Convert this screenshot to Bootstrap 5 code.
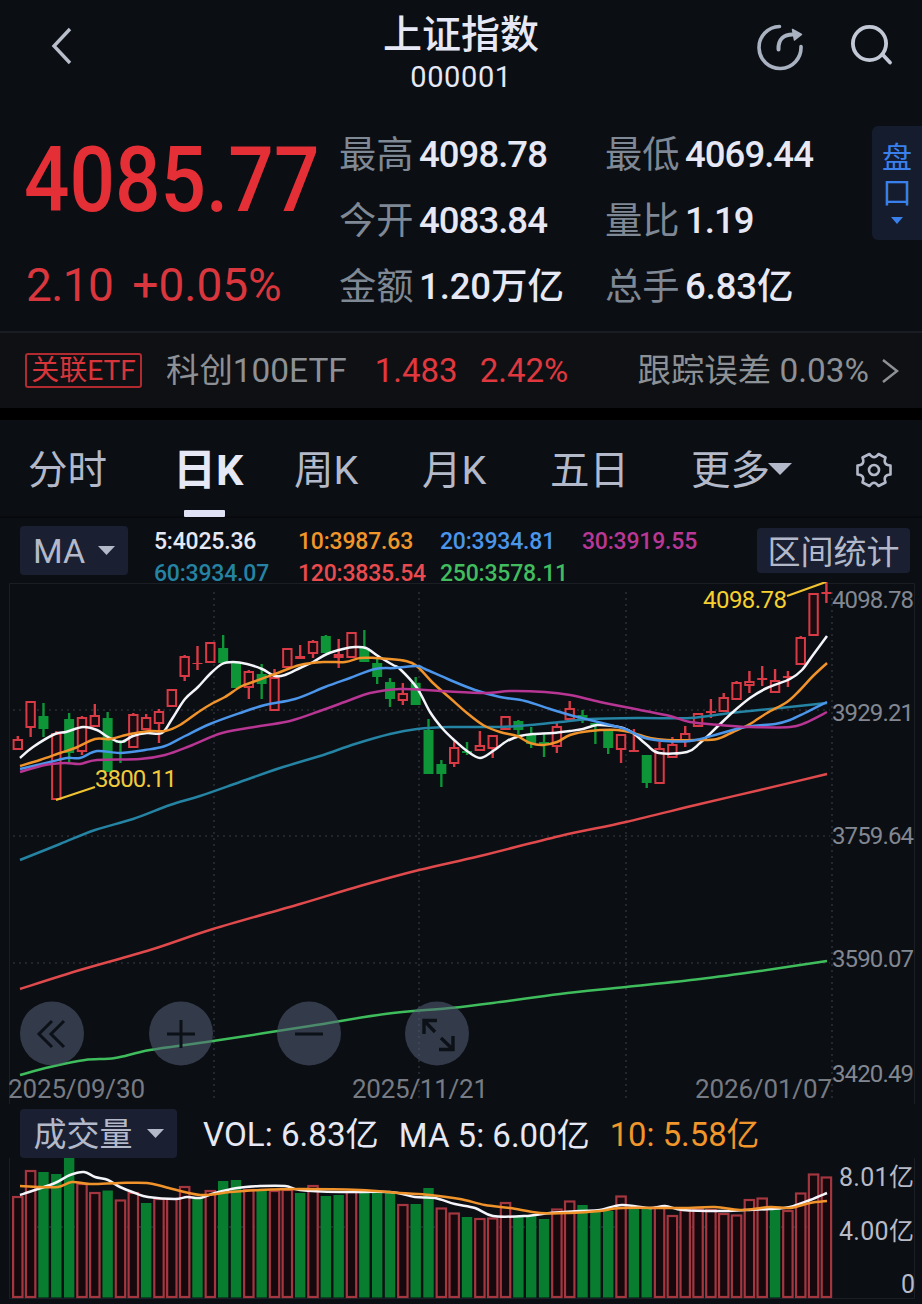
<!DOCTYPE html>
<html lang="zh-CN" data-bs-theme="dark">
<head>
<meta charset="utf-8">
<meta name="viewport" content="width=device-width, initial-scale=1">
<title>上证指数 000001</title>
<link rel="stylesheet" href="https://cdn.jsdelivr.net/npm/bootstrap@5.3.0/dist/css/bootstrap.min.css">
<style>
:root{--ink:#e6e8f5;--soft:#b3b9c9;--dim:#7f8895;--up:#e42f37;--chip:#1a2032}
body{background:#0b0e13;color:var(--ink);font-family:Roboto,"Noto Sans CJK SC",sans-serif;line-height:1;overflow:hidden}
.screen{width:922px;height:1304px}
.screen svg{display:block;flex:none}
.screen span,.screen h1,.screen button,.screen a{white-space:nowrap}
.top-bar{height:124px;padding:12px 29px 0 50px;display:grid;grid-template-columns:333px 156px 1fr}
.top-bar h1{font-size:39px;font-weight:500;line-height:46px;margin:0;color:var(--ink)}
.code{font-size:29px;line-height:36px;padding-top:1px;letter-spacing:.6px}
.icons{gap:46px}
.quote{height:207px;display:grid;grid-template-columns:314px 266px 267px 1fr;padding-left:25px}
.price{font-size:90px;font-weight:500;color:var(--up);line-height:114px;transform:scaleX(.89);transform-origin:left;width:320px;margin-left:-1px;white-space:nowrap}
.change{font-size:46px;color:#d9363e;line-height:50px;padding:22px 0 0 1px;gap:19px}
.change span:first-child{letter-spacing:-.6px}
.stat{height:66px;gap:6px;font-size:37.3px;padding-bottom:3px}
.stat .k{color:var(--dim);width:74px}
.stat .v{font-weight:500;letter-spacing:-.95px;font-size:36.5px}
.stat .cj{letter-spacing:-.1px}
.pan{width:50px;height:114px;margin-top:2px;background:#141c2e;color:#3a80ec;font-size:30px;line-height:35px;border-radius:6px 0 0 6px;padding-top:14px}
.etf{height:77px;border-top:2px solid #1a1d23;background:#0e1014;padding:0 23px 0 25px;color:#8d9095;font-size:33.4px}
.etf .tagbox{border:2px solid #b12a30;color:#d8353b;font-size:28px;height:35px;width:117px;line-height:31px;border-radius:3px}
.redtxt{color:#e0383e;font-size:33px}
.gap-bar{height:12px;background:#000}
.k-tabs{height:98px;border-bottom:2px solid #07090c;color:var(--soft);font-size:39.5px;display:grid;grid-template-columns:148px 118px 128px 128px 141px 163px 1fr;padding-left:28px}
.k-tabs a{color:inherit;text-decoration:none;height:98px;padding-top:3px}
.k-tabs .on{color:var(--ink);font-weight:700;position:relative;font-size:43px}
.k-tabs .on span{margin-left:-3px}
.k-tabs .on::after{content:"";position:absolute;left:8px;bottom:1px;width:41px;height:7px;background:#dfe2f4;border-radius:1px}
.ind{height:64px;padding:8px 12px 0 20px}
.chip{background:var(--chip);color:var(--soft);border:0;border-radius:4px;height:49px}
.legend{display:grid;grid-template-columns:144px 142px 142px 130px;font-size:23px;line-height:32px;margin-left:26px;font-weight:500;height:57px;letter-spacing:-.2px}
.vol-head{height:54px;padding:5px 0 0 20px;font-size:33.2px}
.vol-head>span{padding-top:3px}
svg text{font-family:Roboto,"Noto Sans CJK SC",sans-serif}
</style>
<script src="https://cdn.jsdelivr.net/npm/bootstrap@5.3.0/dist/js/bootstrap.bundle.min.js"></script>
</head>
<body>
<main class="screen d-flex flex-column">
  <header class="top-bar">
    <svg width="24" height="66" viewBox="0 0 24 66" fill="none" stroke="#b9becb" stroke-width="3.4"><path d="M20 17 4 34 20 51"/></svg>
    <div class="text-center"><h1>上证指数</h1><div class="code">000001</div></div>
    <div class="d-flex justify-content-end icons">
      <svg width="48" height="66" viewBox="756 12 48 66" fill="none" stroke="#a9b2c0" stroke-width="3.6" stroke-linecap="round"><path d="M779.500 26.500A21 21 0 1 0 801 46.500"/><path d="M778.500 49.500C778 39 784 34 794 34.500" stroke-width="4"/><path d="M792.500 29.500 801.500 34.500 794.500 40Z" fill="#a9b2c0" stroke-width="1.500" stroke-linejoin="round"/></svg>
      <svg width="43" height="66" viewBox="850 12 43 66" fill="none" stroke="#c3c8d6" stroke-width="3.8" stroke-linecap="round"><circle cx="869.500" cy="43.500" r="16.600"/><path d="M882.500 54.500 890 62.500"/></svg>
    </div>
  </header>

  <section class="quote">
    <div><div class="price">4085.77</div><div class="change d-flex"><span>2.10</span><span>+0.05%</span></div></div>
    <div>
      <div class="stat d-flex align-items-center"><span class="k">最高</span><span class="v">4098.78</span></div>
      <div class="stat d-flex align-items-center"><span class="k">今开</span><span class="v">4083.84</span></div>
      <div class="stat d-flex align-items-center"><span class="k">金额</span><span class="v cj">1.20万亿</span></div>
    </div>
    <div>
      <div class="stat d-flex align-items-center"><span class="k">最低</span><span class="v">4069.44</span></div>
      <div class="stat d-flex align-items-center"><span class="k">量比</span><span class="v">1.19</span></div>
      <div class="stat d-flex align-items-center"><span class="k">总手</span><span class="v cj">6.83亿</span></div>
    </div>
    <div class="pan d-flex flex-column align-items-center"><span>盘</span><span>口</span><svg width="12" height="20" viewBox="0 0 12 20"><path d="M0 7H12L6 14Z" fill="#3a80ec"/></svg></div>
  </section>

  <section class="etf d-flex align-items-center">
    <span class="tagbox text-center">关联ETF</span>
    <span class="ms-4">科创100ETF</span>
    <span class="redtxt ms-4 ps-1">1.483</span>
    <span class="redtxt" style="margin-left:22px">2.42%</span>
    <span class="ms-auto">跟踪误差 0.03%</span>
    <svg class="ms-2" width="22" height="30" viewBox="0 0 22 30" fill="none" stroke="#8d9095" stroke-width="2.500"><path d="M6 4 20 15 6 26"/></svg>
  </section>
  <div class="gap-bar"></div>

  <nav class="k-tabs">
    <a class="d-flex align-items-center" href="#">分时</a>
    <a class="on d-flex align-items-center" href="#"><span>日K</span></a>
    <a class="d-flex align-items-center" href="#">周K</a>
    <a class="d-flex align-items-center" href="#">月K</a>
    <a class="d-flex align-items-center" href="#">五日</a>
    <a class="d-flex align-items-center" href="#">更多<svg width="24" height="16" viewBox="0 0 24 16" style="margin-left:-2px"><path d="M0 0H24L12 12Z" fill="#b3b9c9"/></svg></a>
    <a class="d-flex align-items-center" href="#"><svg width="40" height="38" viewBox="-20 -18 40 38" fill="none" stroke="#b3b9c9" stroke-width="2.600" stroke-linejoin="round"><path d="M16.500-4.500V4.500Q8.500 5 11.500 12.500L4.500 16Q0 9.500-4.500 16L-11.500 12.500Q-8.500 5-16.500 4.500V-4.500Q-8.500-5-11.500-12.500L-4.500-16Q0-9.500 4.500-16L11.500-12.500Q8.500-5 16.500-4.500Z"/><circle r="5"/></svg></a>
  </nav>

  <section class="ind d-flex align-items-start">
    <button class="chip d-flex align-items-center justify-content-center p-0" style="width:108px;font-size:34px;gap:13px"><span>MA</span><svg width="17" height="12" viewBox="0 0 17 12"><path d="M0 1H17L8.500 10Z" fill="#b3b9c9"/></svg></button>
    <div class="legend">
      <span>5:4025.36</span><span style="color:#f0962b">10:3987.63</span><span style="color:#4b95ea">20:3934.81</span><span style="color:#b93796">30:3919.55</span>
      <span style="color:#2583a3">60:3934.07</span><span style="color:#ea4b4f">120:3835.54</span><span style="color:#41bd5f">250:3578.11</span>
    </div>
    <button class="chip ms-auto text-center" style="width:153px;height:45px;font-size:33px;margin-top:2px;padding:3px 0 0">区间统计</button>
  </section>

  <svg id="kline" width="922" height="522" viewBox="0 582 922 522"></svg>

  <section class="vol-head d-flex align-items-center">
    <button class="chip d-flex align-items-center justify-content-center" style="width:157px;font-size:33px;gap:14px;padding:2px 0 0"><span>成交量</span><svg width="17" height="12" viewBox="0 0 17 12"><path d="M0 0H17L8.500 9Z" fill="#b3b9c9"/></svg></button>
    <span style="margin-left:26px">VOL: 6.83亿</span><span style="margin-left:20px;font-size:33px">MA 5: 6.00亿</span><span style="margin-left:20px;color:#f0962b;font-size:32.8px">10: 5.58亿</span>
  </section>

  <svg id="volume" width="922" height="146" viewBox="0 1158 922 146"></svg>
</main>
<script>
const X0=17.8, STEP=12.835, cx=i=>X0+STEP*i;
// colour, high, body top, body bottom, low
const candles=`r736,739,750,750|r701,701,728,737|g703,716,729,737|r731,733,800,800|g713,719,753,763|r716,717,752,755|r704,715,727,727|g712,718,772,772|g740,741,743,763|r713,714,748,748|r714,717,730,730|r709,711,724,743|r689,689,707,707|r655,656,677,681|r646,663,664,670|r642,642,663,663|g635,648,663,663|g663,663,688,688|r670,671,688,699|g664,674,684,699|r669,677,711,711|r648,648,668,668|r645,656,659,659|r640,641,654,658|g635,636,653,653|r639,654,658,668|r632,632,658,658|g630,648,662,662|g659,663,677,684|g678,682,699,707|r683,693,701,705|g677,683,705,705|g719,730,774,774|g760,764,774,787|r740,747,764,767|g742,751,753,755|r731,745,751,751|r735,735,749,758|r716,716,730,730|g720,721,730,735|g727,735,744,748|g733,742,744,757|r723,726,747,753|r701,708,720,720|g710,715,720,723|g723,723,725,744|g730,731,748,754|r734,734,750,763|r729,750,752,752|g755,755,783,788|r742,748,784,784|r737,744,758,758|r726,733,741,747|r713,713,727,727|r699,711,713,718|r693,697,712,712|r681,682,700,700|r671,681,686,693|r666,678,680,686|r669,680,693,693|r671,676,678,687|r636,637,665,665|r593,593,636,636|r582,592,594,603`
  .split('|').map(s=>[s[0],...s.slice(1).split(',').map(Number)]);
// colour and top of each volume column
const vols='r1197 r1171 g1172 g1174 g1158 r1184 r1193 g1190.5 r1200.5 r1193 g1203 r1199 r1199 r1187 g1197 r1191 g1181 g1180 r1190 g1190 r1191 r1190 g1193 r1186 g1196 g1195 r1192 g1192 g1193 g1193 r1205 g1204 g1188 r1208.5 r1213.5 g1217 r1219 r1218.5 r1203 g1216 g1216 g1219 r1209.5 r1201.5 g1205 g1210.5 g1211 r1196.5 g1208 g1209 r1207 r1216 r1210 r1209 r1210 r1214 r1215.5 r1200 r1198.5 g1209 r1211 r1193.5 r1174.5 r1177.5'.split(' ');
const averages=[
 ['#2583a3','20,860 60,844 95,830 133,819 170,805 200,796 240,782 280,768 320,756 355,744 390,734 417,729 450,727 500,727 530,725 560,722 590,719 640,718 690,718 730,713 780,708 827,703'],
 ['#e04a4c','20,989 80,970 150,950 213,929 300,904 360,886 419,870 480,856 560,836 626,822 700,804 760,790 827,774'],
 ['#3fbd5c','20,1075 50,1067 85,1060 115,1058 150,1050 213,1041 310,1026 385,1014 450,1008 500,1002 560,994 626,987 700,979 760,971 827,961'],
 ['#f4f5fa','20,758 33,747 55,734 66,732 83,727 97,730 108,737 121,742 133,736 147,733 162,733 172,719 185,699 198,687 210,674 222,664 233,662 247,664 262,669 275,676 285,675 300,668 313,662 327,654 343,649 355,647 366,648 378,656 393,665 400,669 417,688 430,712 442,728 453,739 467,751 480,758 493,751 507,741 520,736 533,734 553,733 570,731 583,729 597,725 613,726 623,728 633,733 647,745 659,753 687,752 700,743 717,727 733,712 750,698 767,688 790,679 802,670 813,655 827,636'],
 ['#f0932b','20,766 40,760 60,753 75,748 95,739 110,739 130,734 150,731 165,731 180,725 200,711 213,703 225,697 240,687 250,683 275,674 300,665 325,662 345,662 360,658 375,658 400,660 412,663 420,669 433,683 450,698 467,713 483,725 500,732 517,736 530,743 543,745 557,742 570,735 590,731 617,730 633,733 650,738 667,740 697,740 717,739 733,732 750,724 767,713 787,702 800,690 813,676 827,663'],
 ['#4b95ea','20,769 50,762 67,758 80,758 97,751 120,753 145,750 165,746 185,736 210,724 240,713 265,705 295,699 325,687 350,678 375,669 395,668 417,666 425,669 450,680 475,690 500,697 525,701 550,709 570,715 590,720 610,725 625,729 645,738 665,741 690,741 715,735 745,727 775,724 790,720 805,713 827,702'],
 ['#b73593','20,772 45,765 65,763 80,764 97,760 140,759 165,755 190,746 222,733 260,726 290,721 320,711 350,700 370,693 400,689 440,691 485,693 510,691 545,692 570,695 600,702 640,710 670,716 690,722 720,725 750,727 790,727 805,723 827,712']];
const volAverages=[
 ['#f4f5fa','20,1195 35,1190 55,1183 70,1175 84,1172 95,1177 108,1180 120,1187 135,1193 148,1197 175,1199 187,1197 200,1198 215,1193 237,1188 260,1186 285,1186 300,1190 340,1192 390,1192 415,1197 435,1198 455,1204 475,1208 493,1216 525,1216 550,1213 580,1211 600,1210 622,1205 650,1208 665,1206 683,1210 720,1211 745,1210 770,1209 790,1207 810,1200 827,1193'],
 ['#f0932b','20,1186 40,1187 58,1187 72,1182 90,1184 120,1183 147,1183 165,1187 200,1195 230,1192 260,1190 300,1189 360,1190 400,1193 430,1195 460,1199 485,1205 510,1208 540,1213 570,1213 600,1211 622,1208 680,1208 715,1207 740,1210 770,1207 790,1208 810,1203 827,1201']];
const curve=([c,p])=>{
  const q=p.split(' ').map(s=>s.split(',').map(Number));let d='M'+q[0];
  for(let i=0;i<q.length-1;i++){const a=q[i-1]||q[i],b=q[i],e=q[i+1],f=q[i+2]||e;
    d+=`C${b[0]+(e[0]-a[0])/6},${b[1]+(e[1]-a[1])/6} ${e[0]-(f[0]-b[0])/6},${e[1]-(f[1]-b[1])/6} ${e}`}
  return `<path d="${d}" fill="none" stroke="${c}" stroke-width="2.500"/>`};
const txt=(x,y,w,size,fill,s)=>`<text x="${x}" y="${y}" textLength="${w}" font-size="${size}" fill="${fill}">${s}</text>`;
const dot='stroke="#2b2f36" stroke-width="1.6" stroke-dasharray="2 4"';
const G='#0d9537', R='#d83b46';

let k='<path d="M9.500 1104V583.500H914.500V1104" fill="none" stroke="#1b1e24"/>';
[214,419,626,832].forEach(x=>k+=`<path d="M${x} 592V1100" ${dot}/>`);
[710,836,963].forEach(y=>k+=`<path d="M13 ${y}H830" ${dot}/>`);
candles.forEach(([c,h,t,b,l],i)=>{const x=cx(i),col=c=='g'?G:R;
  if(h<t)k+=`<path d="M${x} ${h}V${t}" stroke="${col}" stroke-width="2.400"/>`;
  if(l>b)k+=`<path d="M${x} ${b}V${l}" stroke="${col}" stroke-width="2.400"/>`;
  k+=c=='g'||b-t<5?`<rect x="${x-5}" y="${t}" width="10" height="${b-t}" fill="${col}"/>`
    :`<rect x="${x-4.2}" y="${t+1}" width="8.400" height="${b-t-2}" fill="#1a0b10" stroke="${R}" stroke-width="2"/>`});
k+=averages.map(curve).join('');
k+='<path d="M56 800 95 787M787 596 826 582" stroke="#f0c330" stroke-width="2.200"/>';
k+=txt(95,787,82,24,'#f0cb3c','3800.11')+txt(703,608,84,24,'#f5d02f','4098.78');
[['4098.78',608],['3929.21',721],['3759.64',844],['3590.07',967],['3420.49',1082]].forEach(([s,y])=>k+=txt(832,y,82,24,'#828791',s));
k+=txt(8,1098,137,26,'#777b83','2025/09/30')+txt(352,1098,136,26,'#777b83','2025/11/21')+txt(695,1098,137,26,'#777b83','2026/01/07');
[52,181,309,437].forEach(x=>k+=`<circle cx="${x}" cy="1033.500" r="32" fill="#556079" fill-opacity=".54"/>`);
k+='<g fill="none" stroke="#0c1017" stroke-width="3"><path d="M52 1021 39 1034 52 1047M64 1021 51 1034 64 1047"/><path d="M167 1034H195M181 1020V1048"/><path d="M295 1034H323"/><path d="M424 1034V1020.500H437M424 1020.500 435 1032M453 1036V1049.500H439M453 1049.500 441 1038" stroke-width="3.400"/></g>';
document.getElementById('kline').innerHTML=k;

let v='<path d="M9.500 1158V1298.500H914.500V1158" fill="none" stroke="#1b1e24"/>'+`<path d="M13 1227H830" ${dot}/>`;
vols.forEach((s,i)=>{const x=cx(i),y=+s.slice(1);
  v+=s[0]=='g'?`<rect x="${x-5.2}" y="${y}" width="10.400" height="${1297.5-y}" fill="#087d30"/>`
    :`<rect x="${x-4.7}" y="${y}" width="9.400" height="${1297-y}" fill="#16090d" stroke="#a43640" stroke-width="2.200"/>`});
v+=volAverages.map(curve).join('');
v+=txt(839,1186,75,25,'#b7bbc8','8.01亿')+txt(839,1240,75,25,'#b7bbc8','4.00亿')+txt(901,1293,14,25,'#b7bbc8','0');
document.getElementById('volume').innerHTML=v;
</script>
</body>
</html>
